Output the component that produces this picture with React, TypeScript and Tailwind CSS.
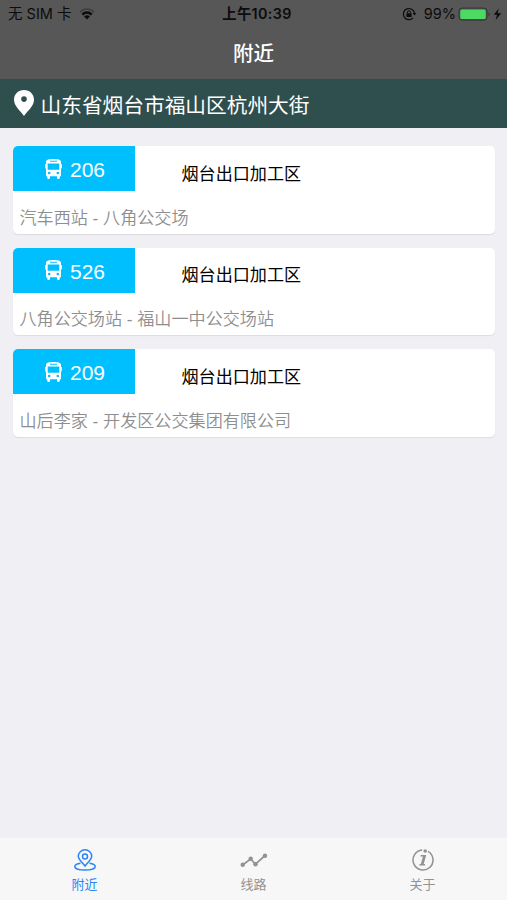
type BusLine = {
  id: number;
  name: string;
  station: string;
  route: string;
};

const lines: BusLine[] = [
  { id: 1, name: "206", station: "烟台出口加工区", route: "汽车西站 - 八角公交场" },
  { id: 2, name: "526", station: "烟台出口加工区", route: "八角公交场站 - 福山一中公交场站" },
  { id: 3, name: "209", station: "烟台出口加工区", route: "山后李家 - 开发区公交集团有限公司" },
];

function BusIcon() {
  return (
    <svg width="17" height="20" viewBox="0 0 17 20" fill="#fff">
      <path
        fillRule="evenodd"
        d="M1 2.600C1.200.8 4 0 8.500 0S15.800.8 16 2.600V17.200h-1.200v1.600c0 .7-.4 1.100-1 1.100h-.8c-.6 0-1-.4-1-1.100v-1.600H5v1.600c0 .7-.4 1.100-1 1.100h-.8c-.6 0-1-.4-1-1.100v-1.600H1zM5 1.800v1h7v-1zM2.700 4.600v6.200h11.600V4.600zM4.200 12.700a1.300 1.300 0 1 0 0 2.600 1.300 1.300 0 0 0 0-2.600zM12.800 12.700a1.300 1.300 0 1 0 0 2.600 1.300 1.300 0 0 0 0-2.600z"
      />
      <path d="M.2 5h1.200v4.500H.8a.6.6 0 0 1-.6-.6zM15.600 5h1.200v3.900a.6.6 0 0 1-.6.6h-.6z" />
    </svg>
  );
}

function StatusBar() {
  return (
    <div className="grid h-7 grid-cols-3 items-center px-2 font-['Inter','Noto_Sans_CJK_SC',sans-serif] text-[14.5px] text-[#0c0c0c]">
      <div className="flex items-center">
        <span className="whitespace-pre">无 SIM 卡</span>
        <svg className="ml-[8px]" width="16" height="12" viewBox="0 0 16 12" fill="none">
          <path d="M1 4.2C5-.1 11-.1 15 4.2" stroke="#3e3e3e" strokeWidth="1.7" />
          <path d="M3.3 6.600c2.800-2.800 6.600-2.800 9.400 0" stroke="#0c0c0c" strokeWidth="2.400" />
          <path d="M5.100 8.500c1.700-1.600 4.100-1.600 5.800 0L8 11.500z" fill="#0c0c0c" />
        </svg>
      </div>
      <div className="pl-[7px] text-center text-[14.3px] font-semibold tracking-[0.35px]">上午10:39</div>
      <div className="-mr-[3px] flex items-center justify-end">
        <svg className="mr-[7px]" width="15" height="14" viewBox="0 0 15 14" fill="none" stroke="#0c0c0c">
          <path d="M11.1 10.9A5.6 5.6 0 1 1 12.5 6.2" strokeWidth="1.2" />
          <path d="M10.6 6h3.8l-1.9 2.6z" fill="#0c0c0c" stroke="none" />
          <rect x="4.4" y="6.2" width="5.2" height="3.8" rx=".5" fill="#0c0c0c" stroke="none" />
          <path d="M5.5 6.4V5.2a1.5 1.5 0 0 1 3 0v1.2" />
        </svg>
        <span className="text-[14.5px]">99%</span>
        <svg className="ml-[2px]" width="44" height="15" viewBox="0 0 44 15">
          <rect x="1" y="1.100" width="28" height="12" rx="3" fill="none" stroke="#343434" />
          <rect x="2.300" y="2.400" width="25.400" height="9.600" rx="1.500" fill="#4cd964" />
          <path d="M30.6 5.200c1.400.5 1.400 3.600 0 4.100z" fill="#2b2b2b" />
          <path d="M40.800 1.500 35.800 7.700h3.200l-1.300 5.300L43.200 6.200h-3.600z" fill="#0c0c0c" />
        </svg>
      </div>
    </div>
  );
}

function LineCard({ line }: { line: BusLine }) {
  return (
    <div className="h-[87.5px] overflow-hidden rounded-[5px] bg-white shadow-[0_1px_1px_#dcdce0]">
      <div className="flex h-[45px]">
        <div className="flex w-[122.5px] items-center gap-[8px] bg-[#00bfff] pl-[32.5px] text-white">
          <BusIcon />
          <span className="pt-[2px] text-[21px]">{line.name}</span>
        </div>
        <div className="flex items-center pt-[11px] pl-[46.5px] text-[17.1px] text-black">{line.station}</div>
      </div>
      <div className="flex h-[42.5px] items-center pt-[11px] pl-[7px] text-[17.1px] font-[350] whitespace-pre text-[#8e8e8e]">{line.route}</div>
    </div>
  );
}

export default function App() {
  return (
    <div className="flex h-[900px] w-[507px] flex-col bg-[#efeff4] font-['Liberation_Sans','Noto_Sans_CJK_SC',sans-serif] leading-none">
      <header className="h-[79px] bg-[#575757]">
        <StatusBar />
        <h1 className="pt-[16px] text-center text-[20.5px] font-medium text-white">附近</h1>
      </header>

      <div className="flex h-[48.5px] items-center bg-[#2f4f4f] pl-[14px] text-[20.7px] text-white">
        <svg width="20" height="26" viewBox="0 0 20 26" fill="#fff">
          <path fillRule="evenodd" d="M10 0C4.400 0 0 4.200 0 9.700 0 16 6.300 20.500 10 26c3.700-5.500 10-10 10-16.300C20 4.200 15.600 0 10 0zm0 6.300a2.800 2.800 0 1 1 0 5.600 2.800 2.800 0 0 1 0-5.600z" />
        </svg>
        <span className="pt-[6px] pl-[6.5px]">山东省烟台市福山区杭州大街</span>
      </div>

      <main className="flex flex-1 flex-col gap-[14px] px-[12.5px] pt-[18.8px]">
        {lines.map((line) => (
          <LineCard key={line.id} line={line} />
        ))}
      </main>

      <nav className="grid h-[62px] grid-cols-3 bg-[#f7f7f7] text-[13px] text-[#929292]">
        <div className="flex flex-col items-center pt-[11px] text-[#2b86f5]">
          <svg width="22" height="22" viewBox="0 0 22 22" fill="none" stroke="currentColor" strokeWidth="1.5">
            <path d="M11 17C8 13 4.300 10.500 4.300 7.300a6.700 6.500 0 0 1 13.400 0C17.700 10.500 14 13 11 17z" />
            <circle cx="11" cy="7.500" r="2.500" />
            <path d="M6.500 14.300C3 14.800.8 16 .8 17.500c0 2.100 4.500 3.600 10.200 3.600s10.200-1.500 10.200-3.600c0-1.500-2.200-2.700-5.700-3.200" />
          </svg>
          <span className="mt-[6.500px]">附近</span>
        </div>
        <div className="flex flex-col items-center pt-[11px]">
          <svg width="28" height="22" viewBox="0 0 28 22" fill="currentColor">
            <path d="M2.700 16 10.700 9.800 15.300 15.300 25 6.500" fill="none" stroke="currentColor" strokeWidth="1.700" />
            <circle cx="2.700" cy="15.800" r="2.200" />
            <circle cx="10.700" cy="9.800" r="2.200" />
            <circle cx="15.500" cy="15.200" r="2.200" />
            <circle cx="25" cy="6.700" r="2.200" />
          </svg>
          <span className="mt-[6.500px]">线路</span>
        </div>
        <div className="flex flex-col items-center pt-[11px]">
          <svg width="22" height="22" viewBox="0 0 22 22" fill="currentColor">
            <path d="M10.200 1A10 10 0 1 0 16 2.300" fill="none" stroke="currentColor" strokeWidth="1.500" />
            <circle cx="13.200" cy="2" r="1.800" />
            <path d="M8.800 6h5.400l-2.500 9h1.500l-.4 1.500H7.300l.4-1.500h1.200l2-7.500H8.400z" />
          </svg>
          <span className="mt-[6.500px]">关于</span>
        </div>
      </nav>
    </div>
  );
}
